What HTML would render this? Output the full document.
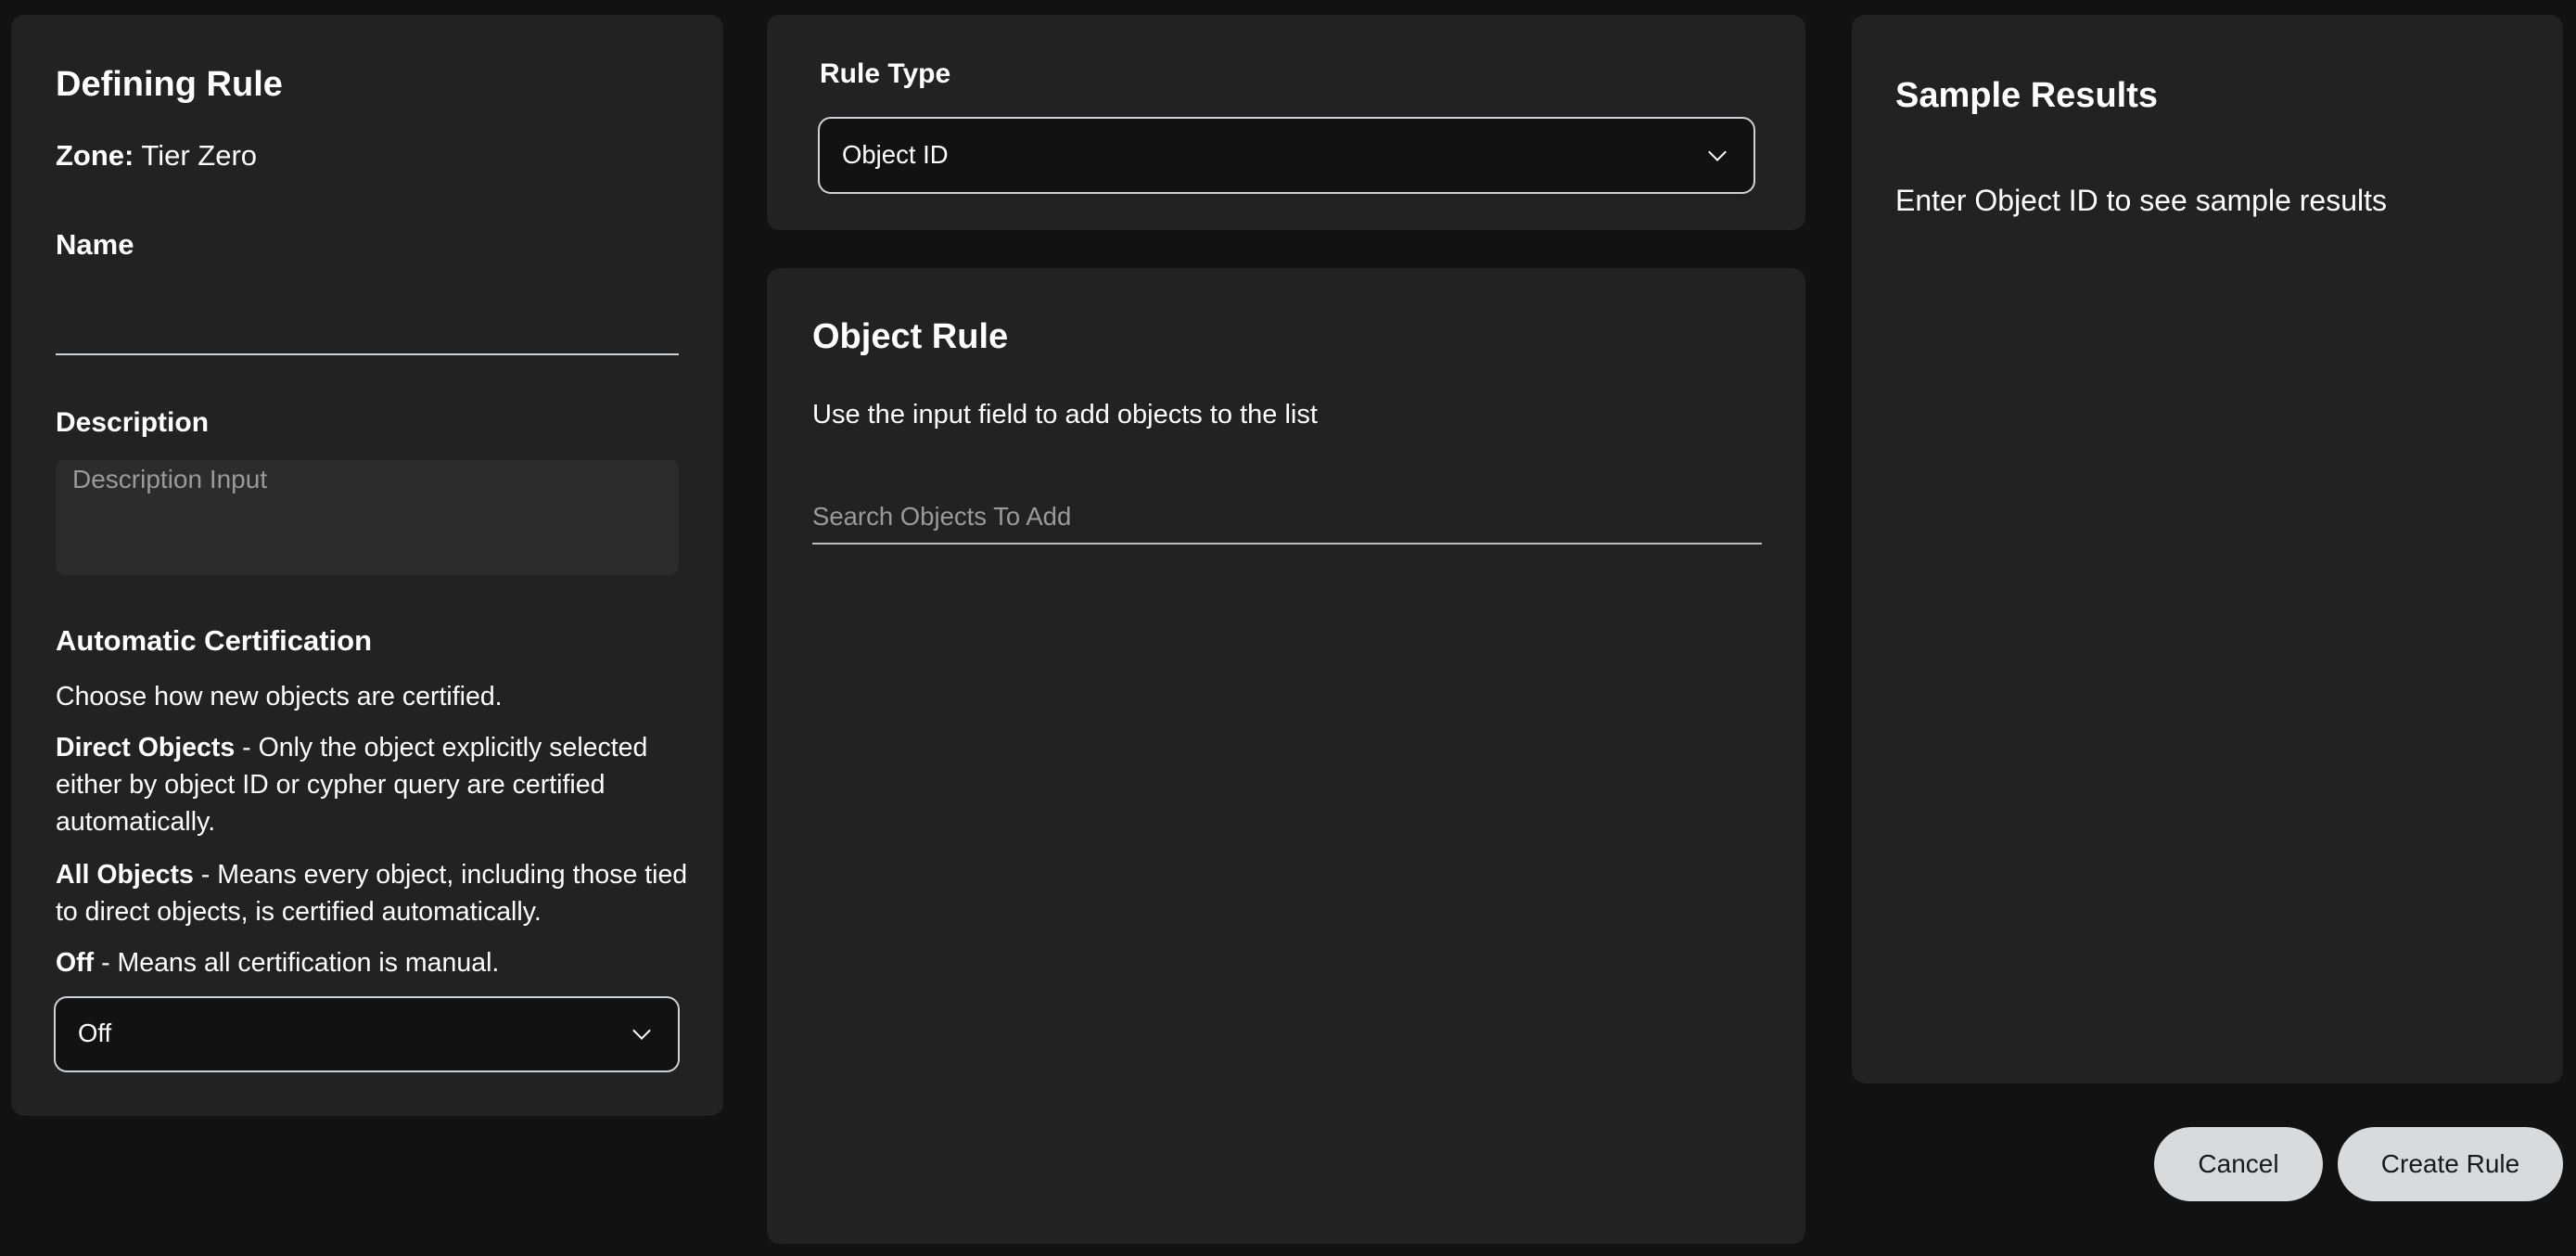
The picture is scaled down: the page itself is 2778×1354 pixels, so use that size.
<!DOCTYPE html>
<html><head><meta charset="utf-8"><style>
*{margin:0;padding:0;box-sizing:border-box}
body{width:2778px;height:1354px;background:#121212;position:relative;overflow:hidden;font-family:"Liberation Sans",sans-serif;color:#fff}
.p{position:absolute;background:#222222;border-radius:14px}
.t{position:absolute;white-space:nowrap;line-height:40px}
.b{font-weight:bold}
.sel{position:absolute;background:#121212;border:2px solid #cfd2d4;border-radius:14px}
.chev{position:absolute;width:14px;height:14px;border-right:2.5px solid #fff;border-bottom:2.5px solid #fff;transform:rotate(45deg)}
.btn{position:absolute;background:#d8dbde;border-radius:40px;color:#1a1a1a;font-size:28px;text-align:center;line-height:80px}
</style></head><body>
<div class="p" style="left:12px;top:16px;width:768px;height:1187px"></div>
<div class="p" style="left:827px;top:16px;width:1120px;height:232px"></div>
<div class="p" style="left:827px;top:289px;width:1120px;height:1052px"></div>
<div class="p" style="left:1997px;top:16px;width:767px;height:1152px"></div>

<div class="t b" style="left:60px;top:71px;font-size:38px;line-height:40px">Defining Rule</div>
<div class="t" style="left:60px;top:148px;font-size:31px"><b>Zone:</b> Tier Zero</div>
<div class="t b" style="left:60px;top:244px;font-size:31px">Name</div>
<div style="position:absolute;left:60px;top:381px;width:672px;height:2px;background:#cfd2d4"></div>
<div class="t b" style="left:60px;top:436px;font-size:30px">Description</div>
<div style="position:absolute;left:60px;top:496px;width:672px;height:124px;background:#2c2c2c;border-radius:10px"></div>
<div class="t" style="left:78px;top:497px;font-size:28px;color:#9a9a9a">Description Input</div>
<div class="t b" style="left:60px;top:671px;font-size:31px">Automatic Certification</div>
<div class="t" style="left:60px;top:731px;font-size:28.5px">Choose how new objects are certified.</div>
<div class="t" style="left:60px;top:786px;font-size:28.5px"><b>Direct Objects</b> - Only the object explicitly selected</div>
<div class="t" style="left:60px;top:826px;font-size:28.5px">either by object ID or cypher query are certified</div>
<div class="t" style="left:60px;top:866px;font-size:28.5px">automatically.</div>
<div class="t" style="left:60px;top:923px;font-size:28.5px"><b>All Objects</b> - Means every object, including those tied</div>
<div class="t" style="left:60px;top:963px;font-size:28.5px">to direct objects, is certified automatically.</div>
<div class="t" style="left:60px;top:1018px;font-size:28.5px"><b>Off</b> - Means all certification is manual.</div>
<div class="sel" style="left:58px;top:1074px;width:675px;height:82px"></div>
<div class="t" style="left:84px;top:1094px;font-size:27.5px">Off</div>
<div class="chev" style="left:685px;top:1104px"></div>

<div class="t b" style="left:884px;top:60px;font-size:30px">Rule Type</div>
<div class="sel" style="left:882px;top:126px;width:1011px;height:83px"></div>
<div class="t" style="left:908px;top:147px;font-size:27.5px">Object ID</div>
<div class="chev" style="left:1845px;top:157px"></div>

<div class="t b" style="left:876px;top:343px;font-size:38px">Object Rule</div>
<div class="t" style="left:876px;top:427px;font-size:29px">Use the input field to add objects to the list</div>
<div class="t" style="left:876px;top:537px;font-size:27.5px;color:#9a9a9a">Search Objects To Add</div>
<div style="position:absolute;left:876px;top:585px;width:1024px;height:2px;background:#bdbdbd"></div>

<div class="t b" style="left:2044px;top:83px;font-size:38px">Sample Results</div>
<div class="t" style="left:2044px;top:196px;font-size:32px">Enter Object ID to see sample results</div>

<div class="btn" style="left:2323px;top:1215px;width:182px;height:80px">Cancel</div>
<div class="btn" style="left:2521px;top:1215px;width:243px;height:80px">Create Rule</div>
</body></html>
